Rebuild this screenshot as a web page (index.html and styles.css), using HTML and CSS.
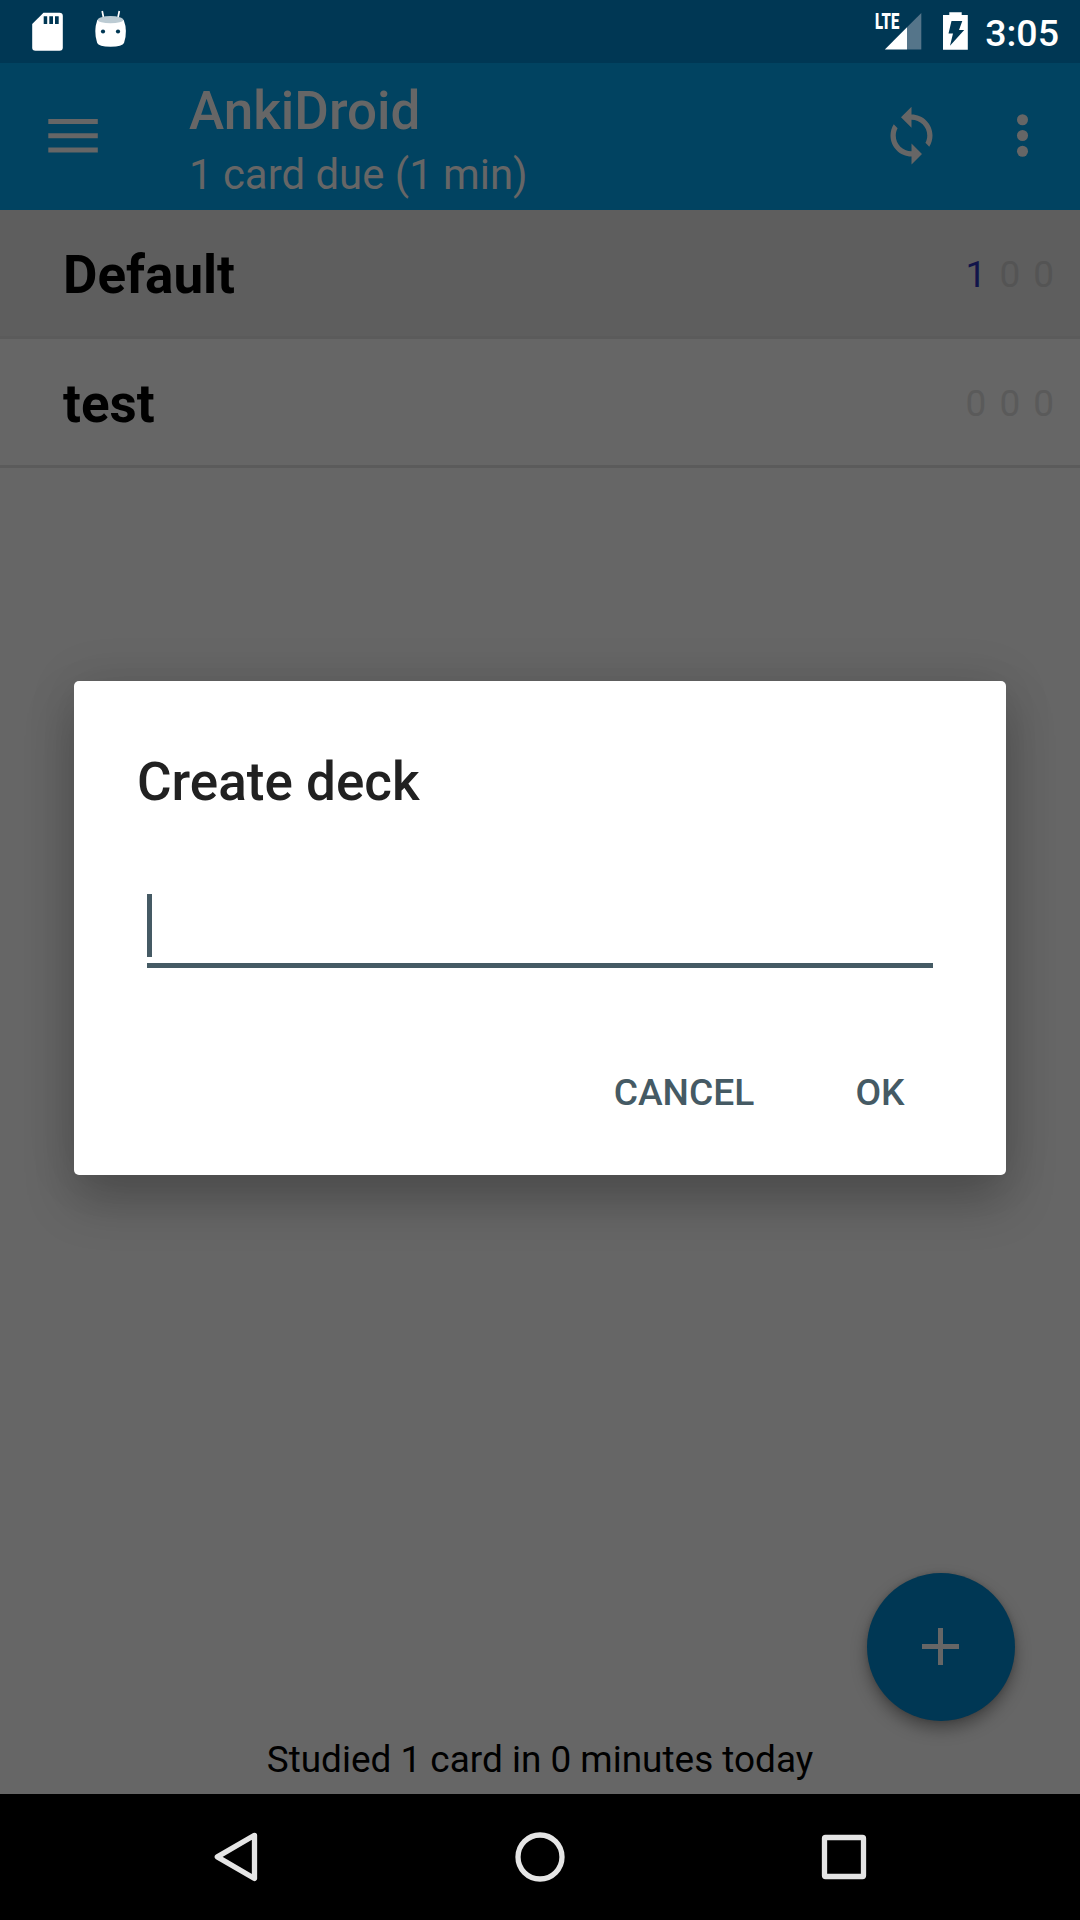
FILE: index.html
```html
<!DOCTYPE html>
<html lang="en">
<head>
<meta charset="utf-8">
<title>AnkiDroid</title>
<link rel="stylesheet" href="styles.css">
</head>
<body>
<div class="screen">
  <header class="status-bar">
    <svg class="status-left" viewBox="0 0 160 63">
      <path fill="#fff" d="M43.500 12.700H59.500q3.300 0 3.300 3.300V47.500q0 3.300-3.300 3.300H35.500q-3.300 0-3.300-3.300V24z"/>
      <path fill="#003754" d="M43.700 16.300h3.500v7.700h-3.500zM49.300 16.300h3.700v7.700h-3.700zM55 16.300h3.700v7.700h-3.700z"/>
      <path stroke="#fff" stroke-width="1.700" d="M102.200 11l1.500 7.500M119.300 11l-1.500 7.500"/>
      <path fill="#fff" d="M97.300 20Q110.500 14 123.700 20Q128 31 124 43Q122.500 46.700 110.500 46.700T97.200 43Q93.300 31 97.300 20z"/>
      <ellipse cx="110.500" cy="19.700" rx="12.800" ry="3.600" fill="#bccbd3"/>
      <circle cx="103" cy="31.500" r="2.100" fill="#003754"/>
      <circle cx="118" cy="31.500" r="2.100" fill="#003754"/>
    </svg>
    <div class="status-right">
      <span class="network">LTE</span>
      <svg class="status-icons" viewBox="880 0 94 63">
        <path fill="#55758a" d="M921.300 13v36.500H907V27.300z"/>
        <path fill="#fff" d="M907 27.300v22.200h-22.200z"/>
        <path fill="#fff" d="M949.300 12.300h12.400v2.700h6.100v34.700h-24.800V15h6.300z"/>
        <path fill="#003754" d="M951.500 21h10.800l-3.300 9h5.200L950 45.700l3-12.200h-4.500z"/>
      </svg>
      <time class="clock">3:05</time>
    </div>
  </header>

  <div class="app-bar">
    <svg class="menu-icon" viewBox="0 0 50 36"><path fill="#666" d="M.3 1h49.500v5H.3zM.3 15.300h49.500v5H.3zM.3 29.500h49.500v5H.3z"/></svg>
    <div class="titles">
      <h1 class="title">AnkiDroid</h1>
      <p class="subtitle">1 card due (1 min)</p>
    </div>
    <svg class="action" viewBox="0 0 24 24"><path fill="#666" d="M12 4V1L8 5l4 4V6c3.310 0 6 2.690 6 6 0 1.010-.25 1.970-.7 2.800l1.460 1.460C19.540 15.030 20 13.570 20 12c0-4.420-3.580-8-8-8zm0 14c-3.310 0-6-2.690-6-6 0-1.010.25-1.970.7-2.800L5.240 7.740C4.460 8.970 4 10.430 4 12c0 4.420 3.580 8 8 8v3l4-4-4-4v3z"/></svg>
    <svg class="action" viewBox="0 0 24 24"><g fill="#666"><circle cx="12" cy="6" r="2.100"/><circle cx="12" cy="12" r="2.100"/><circle cx="12" cy="18" r="2.100"/></g></svg>
  </div>

  <main class="decks">
    <div class="deck selected">
      <span class="deck-name">Default</span>
      <span class="counts"><span class="new">1</span><span>0</span><span>0</span></span>
    </div>
    <div class="deck">
      <span class="deck-name">test</span>
      <span class="counts"><span>0</span><span>0</span><span>0</span></span>
    </div>
  </main>
  <p class="summary">Studied 1 card in 0 minutes today</p>

  <nav class="nav-bar">
    <svg viewBox="0 0 54 54"><path d="M45.500 5.300L8.300 26.900L45.500 48.500z" stroke-linejoin="round"/></svg>
    <svg viewBox="0 0 54 54"><circle cx="27" cy="27" r="22"/></svg>
    <svg viewBox="0 0 54 54"><rect x="7.500" y="7.500" width="39" height="39" rx="1"/></svg>
  </nav>

  <div class="fab"><svg viewBox="0 0 37 37"><path fill="#666" d="M16 0h5v16h16v5H21v16h-5V21H0v-5h16z"/></svg></div>

  <section class="dialog">
    <h2 class="dialog-title">Create deck</h2>
    <div class="field"><span class="caret"></span></div>
    <div class="buttons"><span>CANCEL</span><span>OK</span></div>
  </section>
</div>
</body>
</html>
```
FILE: styles.css
```css
* { box-sizing: border-box; margin: 0; padding: 0; }
body { font-family: Roboto, sans-serif; background: #666; }
svg { display: block; flex: none; }
.screen {
  position: relative;
  width: 1080px;
  height: 1920px;
  display: flex;
  flex-direction: column;
  background: #666;
  overflow: hidden;
}
.status-bar {
  height: 63px;
  flex: none;
  display: flex;
  justify-content: space-between;
  background: #003754;
  color: #fff;
}
.status-left { width: 160px; height: 63px; }
.status-right { display: flex; padding-right: 21px; }
.network {
  width: 5px;
  font-size: 22.500px;
  font-weight: 900;
  line-height: 43px;
  transform: scaleX(.66);
  transform-origin: left;
}
.status-icons { width: 94px; height: 63px; }
.clock {
  padding-left: 11px;
  font-size: 37.500px;
  font-weight: 500;
  line-height: 66px;
}
.app-bar {
  height: 147px;
  flex: none;
  display: flex;
  align-items: center;
  padding: 0 26px 2px 48px;
  background: #014361;
  color: #666;
}
.menu-icon { width: 50px; height: 36px; }
.titles { flex: 1; padding: 9px 0 0 91px; }
.title { font-size: 53px; font-weight: 500; line-height: 62px; }
.subtitle { margin-top: 8px; font-size: 41.900px; line-height: 50px; }
.action { width: 63px; height: 63px; }
.action + .action { margin-left: 48px; }
.decks { flex: 1; }
.deck {
  height: 129px;
  display: flex;
  justify-content: space-between;
  align-items: center;
  padding: 3px 26px 0 63px;
  border-bottom: 3px solid #5b5b5b;
}
.selected { background: #5e5e5e; }
.deck-name { padding-top: 1px; font-size: 53px; font-weight: 700; line-height: 62px; color: #000; }
.counts { display: flex; gap: 13px; font-size: 37px; color: #5a5a5a; }
.selected .counts { color: #545454; }
.selected .new { color: #12154a; }
.summary {
  height: 70px;
  text-align: center;
  font-size: 36.930px;
  line-height: 72px;
  color: #000;
}
.nav-bar {
  height: 126px;
  flex: none;
  display: flex;
  justify-content: space-between;
  align-items: center;
  padding: 0 209px;
  background: #000;
}
.nav-bar svg { width: 54px; height: 54px; fill: none; stroke: #e5e5e5; stroke-width: 5.300; }
.fab {
  position: absolute;
  left: 867px;
  top: 1573px;
  width: 148px;
  height: 148px;
  display: grid;
  place-items: center;
  padding: 0 1px 1px 0;
  border-radius: 50%;
  background: #003754;
  box-shadow: 0 8px 16px rgba(0, 0, 0, .35), 0 0 5px rgba(0, 0, 0, .15);
}
.fab svg { width: 37px; height: 37px; }
.dialog {
  position: absolute;
  left: 74px;
  top: 681px;
  width: 932px;
  height: 494px;
  padding: 70px 73px 0 63px;
  border-radius: 5px;
  background: #fff;
  box-shadow: 0 26px 50px rgba(0, 0, 0, .23), 0 0 50px rgba(0, 0, 0, .1);
}
.dialog-title { font-size: 53px; font-weight: 500; line-height: 62px; color: #212121; }
.field { height: 74px; margin: 81px 0 0 10px; border-bottom: 5px solid #455a64; }
.caret { display: block; width: 5px; height: 63px; background: #455a64; }
.buttons {
  display: flex;
  justify-content: flex-end;
  gap: 101px;
  padding: 100px 28.500px 0 0;
  font-size: 37.200px;
  font-weight: 500;
  line-height: 48px;
  color: #455a64;
}
```
